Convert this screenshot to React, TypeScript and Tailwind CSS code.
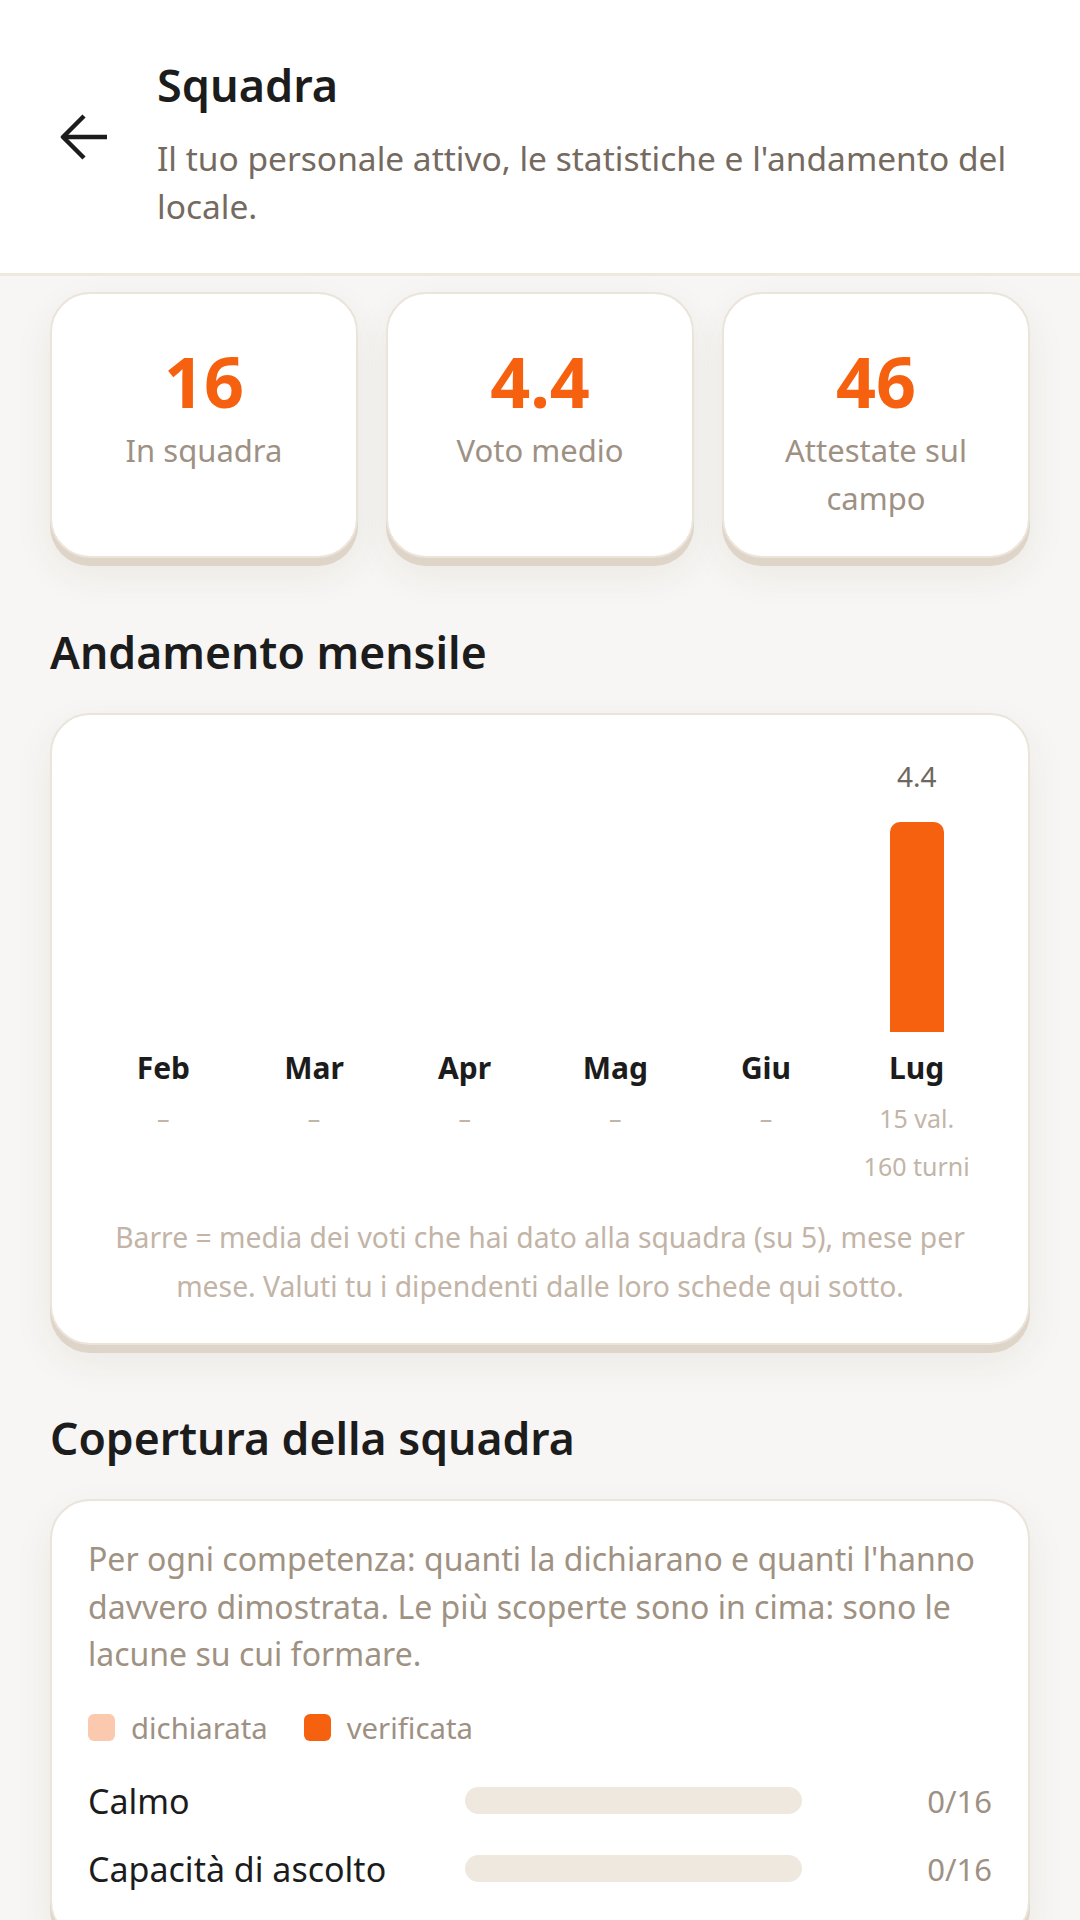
import React from "react";

type Month = { label: string; avg: number | null; ratings?: number; shifts?: number };

const months: Month[] = [
  { label: "Feb", avg: null },
  { label: "Mar", avg: null },
  { label: "Apr", avg: null },
  { label: "Mag", avg: null },
  { label: "Giu", avg: null },
  { label: "Lug", avg: 4.4, ratings: 15, shifts: 160 },
];

const skills = [
  { name: "Calmo", declared: 0, verified: 0 },
  { name: "Capacità di ascolto", declared: 0, verified: 0 },
];

const TEAM = 16;
const BAR_MAX = 239; // altezza barra per voto 5

function BackArrow() {
  return (
    <svg viewBox="0 0 48 48" className="h-[48px] w-[48px]" fill="none" stroke="#1c1c1c" strokeWidth={4.5} strokeLinejoin="round">
      <path d="M3 24H47" />
      <path d="M24 3L3 24L24 45" />
    </svg>
  );
}

function StatCard({ value, label }: { value: string; label: string }) {
  return (
    <div className="rounded-[40px] border-2 border-[#ebe4da] bg-white px-[24px] pt-[49px] pb-[34px] text-center shadow-[0_8px_0_#dfd4c8,0_16px_40px_rgba(70,50,30,0.07)]">
      <div className="text-[70px] font-bold leading-[76px] text-[#f6610f]">{value}</div>
      <div className="mt-[7px] text-[31px] leading-[48px] text-[#9e9184]">{label}</div>
    </div>
  );
}

export default function App() {
  return (
    <div className="min-h-screen bg-[#f7f6f4] font-['Noto_Sans',sans-serif] text-[#1c1c1c]">
      {/* intestazione */}
      <header className="flex items-start border-b-[3px] border-[#efe8df] bg-white pt-[57px] pr-[50px] pb-[43px] pl-[60px]">
        <button className="mt-[56px] shrink-0" aria-label="Indietro">
          <BackArrow />
        </button>
        <div className="ml-[49px]">
          <h1 className="text-[45px] font-semibold leading-[56px]">Squadra</h1>
          <p className="mt-[21px] text-[33.5px] leading-[48px] text-[#756a60]">
            Il tuo personale attivo, le statistiche e l'andamento del locale.
          </p>
        </div>
      </header>

      <main className="px-[50px] pt-[16px]">
        {/* numeri */}
        <div className="grid grid-cols-3 gap-[28px]">
          <StatCard value={String(TEAM)} label="In squadra" />
          <StatCard value="4.4" label="Voto medio" />
          <StatCard value="46" label="Attestate sul campo" />
        </div>

        {/* andamento */}
        <h2 className="mt-[67px] text-[44.5px] font-semibold leading-[54px]">Andamento mensile</h2>
        <section className="mt-[34px] rounded-[40px] border-2 border-[#ebe4da] bg-white px-[36px] pt-[43px] pb-[32px] shadow-[0_8px_0_#dfd4c8,0_16px_40px_rgba(70,50,30,0.07)]">
          <div className="grid grid-cols-6">
            {months.map((m) => (
              <div key={m.label} className="flex flex-col items-center">
                <div className="flex h-[274px] flex-col items-center justify-end">
                  {m.avg !== null && (
                    <>
                      <div className="mb-[28px] text-[28px] leading-[36px] text-[#6f665d]">{m.avg.toFixed(1)}</div>
                      <div
                        className="w-[54px] rounded-t-[10px] bg-[#f6610f]"
                        style={{ height: Math.round((m.avg / 5) * BAR_MAX) }}
                      />
                    </>
                  )}
                </div>
                <div className="mt-[16px] text-[30px] font-bold leading-[40px]">{m.label}</div>
                <div className="mt-[6px] text-center text-[25px] leading-[48px] text-[#c2b5a8]">
                  {m.avg === null ? (
                    "–"
                  ) : (
                    <>
                      <div>{m.ratings} val.</div>
                      <div>{m.shifts} turni</div>
                    </>
                  )}
                </div>
              </div>
            ))}
          </div>
          <p className="mt-[23px] text-center text-[28.3px] leading-[49px] text-[#c2b4a6]">
            Barre = media dei voti che hai dato alla squadra (su 5), mese per mese. Valuti tu i dipendenti dalle loro schede qui sotto.
          </p>
        </section>

        {/* copertura */}
        <h2 className="mt-[66px] text-[44.5px] font-semibold leading-[54px]">Copertura della squadra</h2>
        <section className="mt-[34px] rounded-[40px] border-2 border-[#ebe4da] bg-white px-[36px] pt-[34px] pb-[36px] shadow-[0_8px_0_#dfd4c8,0_16px_40px_rgba(70,50,30,0.07)]">
          <p className="text-[32px] leading-[47.5px] text-[#a09282]">
            Per ogni competenza: quanti la dichiarano e quanti l'hanno davvero dimostrata. Le più scoperte sono in cima: sono le lacune su cui formare.
          </p>
          <div className="mt-[30px] flex items-center text-[29.3px] leading-[40px] text-[#9e9184]">
            <span className="h-[27px] w-[27px] rounded-[6px] bg-[#fbc9ae]" />
            <span className="ml-[16px]">dichiarata</span>
            <span className="ml-[36px] h-[27px] w-[27px] rounded-[6px] bg-[#f6610f]" />
            <span className="ml-[16px]">verificata</span>
          </div>
          <div className="mt-[19px]">
            {skills.map((s) => (
              <div key={s.name} className="flex h-[68px] items-center">
                <div className="w-[377px] shrink-0 text-[34px] leading-[44px]">{s.name}</div>
                <div className="relative h-[27px] flex-1 overflow-hidden rounded-full bg-[#efe8df]">
                  <div className="absolute inset-y-0 left-0 bg-[#fbc9ae]" style={{ width: `${(s.declared / TEAM) * 100}%` }} />
                  <div className="absolute inset-y-0 left-0 bg-[#f6610f]" style={{ width: `${(s.verified / TEAM) * 100}%` }} />
                </div>
                <div className="w-[190px] shrink-0 text-right text-[31px] leading-[44px] text-[#9e9184]">
                  {s.verified}/{TEAM}
                </div>
              </div>
            ))}
          </div>
        </section>
      </main>
    </div>
  );
}
